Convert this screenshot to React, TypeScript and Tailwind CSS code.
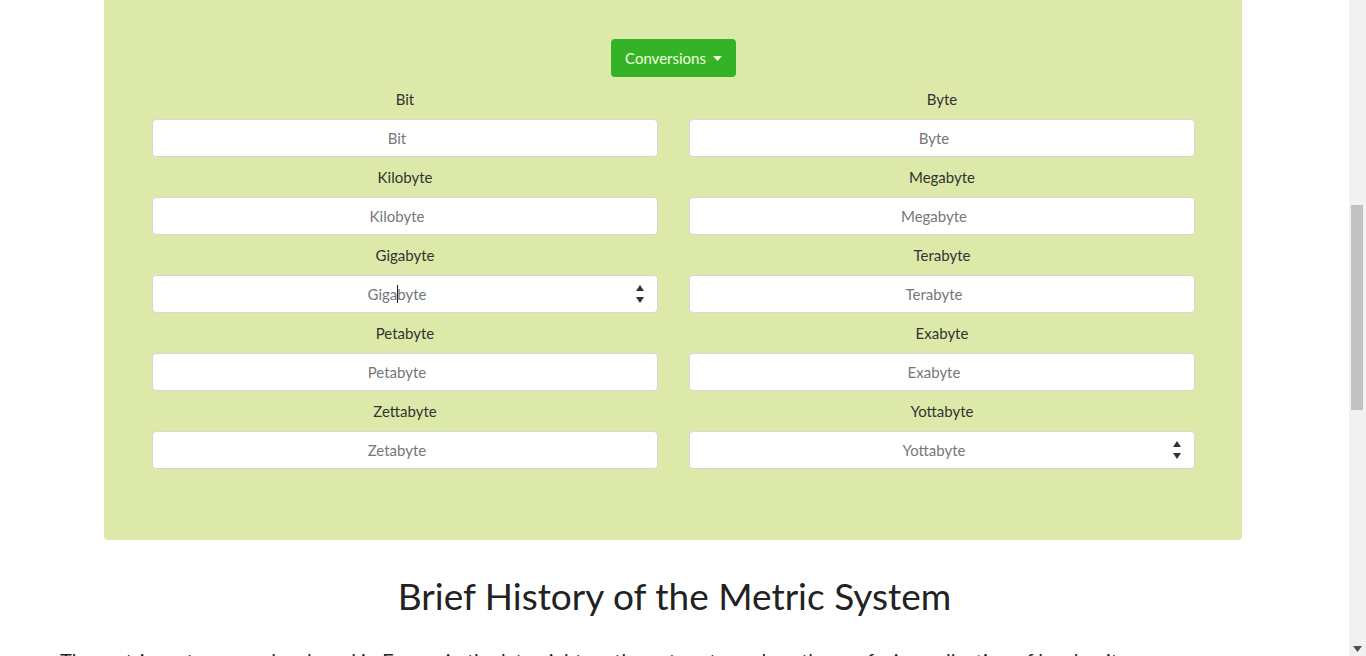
import React from 'react';

const units: [string, string][] = [
  ['Bit', 'Byte'],
  ['Kilobyte', 'Megabyte'],
  ['Gigabyte', 'Terabyte'],
  ['Petabyte', 'Exabyte'],
  ['Zetabyte', 'Yottabyte'],
];

const labels: [string, string][] = [
  ['Bit', 'Byte'],
  ['Kilobyte', 'Megabyte'],
  ['Gigabyte', 'Terabyte'],
  ['Petabyte', 'Exabyte'],
  ['Zettabyte', 'Yottabyte'],
];

const Spinner = () => (
  <svg className="absolute right-[13px] top-[9px]" width="10" height="20" viewBox="0 0 10 20">
    <path d="M5 1 L9 7 L1 7 Z" fill="#333" />
    <path d="M1 13 L9 13 L5 19 Z" fill="#333" />
  </svg>
);

const Field = ({ label, placeholder, spin, caret }: { label: string; placeholder: string; spin?: boolean; caret?: boolean }) => (
  <div className="flex flex-col">
    <label className="h-[40px] pt-[9px] text-center text-[15px] text-[#333]">{label}</label>
    <div className="relative">
      <input
        type="text"
        placeholder={placeholder}
        className="h-[38px] w-full rounded-[4px] border border-[#d6d6d6] bg-white pr-[16px] text-center text-[15px] text-[#333] outline-none placeholder:text-[#777]"
      />
      {caret && <span className="absolute left-[245px] top-[10px] h-[18px] w-px bg-[#222]" />}
      {spin && <Spinner />}
    </div>
  </div>
);

export default function App() {
  return (
    <div className="flex h-[656px] w-[1366px] overflow-hidden bg-white" style={{ fontFamily: 'Lato, "Open Sans", sans-serif' }}>
      <div className="flex-1 overflow-hidden">
        <div className="ml-[104px] w-[1138px] rounded-b-[4px] bg-[#dde9a9] pb-[71px] pl-[48px] pr-[47px] pt-[39px]">
          <div className="flex justify-center">
            <button className="flex h-[38px] w-[125px] items-center justify-center gap-[7px] rounded-[4px] bg-[#34b326] text-[15px] text-[#f4ffe0]">
              Conversions
              <svg width="9" height="5" viewBox="0 0 9 5"><path d="M0 0 L9 0 L4.5 5 Z" fill="#f4ffe0" /></svg>
            </button>
          </div>
          <div className="mt-[2px] grid grid-cols-2 gap-x-[31px]">
            {units.map((row, i) => (
              <React.Fragment key={i}>
                <Field label={labels[i][0]} placeholder={row[0]} spin={i === 2} caret={i === 2} />
                <Field label={labels[i][1]} placeholder={row[1]} spin={i === 4} />
              </React.Fragment>
            ))}
          </div>
        </div>
        <h2 className="mt-[32px] text-center text-[37px] leading-[48px] text-[#222]">Brief History of the Metric System</h2>
        <p className="mt-[25px] whitespace-nowrap px-[60px] text-[20px] leading-[30px] text-[#222]">
          The metric system was developed in France in the late eighteenth century to replace the confusing collection of local units
        </p>
      </div>
      <div className="relative w-[17px] bg-[#f1f1f1]">
        <div className="absolute left-[2px] top-[205px] h-[205px] w-[12px] bg-[#c1c1c1]" />
        <svg className="absolute bottom-[4px] left-[4px]" width="9" height="6" viewBox="0 0 9 6"><path d="M0 0 L9 0 L4.5 6 Z" fill="#505050" /></svg>
      </div>
    </div>
  );
}
